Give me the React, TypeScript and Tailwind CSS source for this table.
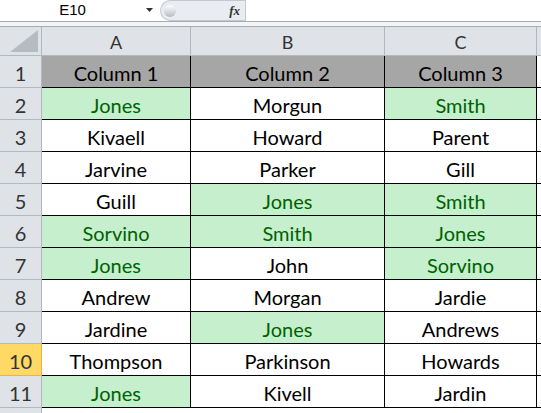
import React from 'react';

type Cell = { text: string; hit?: boolean };

const rows: Cell[][] = [
  [{ text: 'Jones', hit: true }, { text: 'Morgun' }, { text: 'Smith', hit: true }],
  [{ text: 'Kivaell' }, { text: 'Howard' }, { text: 'Parent' }],
  [{ text: 'Jarvine' }, { text: 'Parker' }, { text: 'Gill' }],
  [{ text: 'Guill' }, { text: 'Jones', hit: true }, { text: 'Smith', hit: true }],
  [{ text: 'Sorvino', hit: true }, { text: 'Smith', hit: true }, { text: 'Jones', hit: true }],
  [{ text: 'Jones', hit: true }, { text: 'John' }, { text: 'Sorvino', hit: true }],
  [{ text: 'Andrew' }, { text: 'Morgan' }, { text: 'Jardie' }],
  [{ text: 'Jardine' }, { text: 'Jones', hit: true }, { text: 'Andrews' }],
  [{ text: 'Thompson' }, { text: 'Parkinson' }, { text: 'Howards' }],
  [{ text: 'Jones', hit: true }, { text: 'Kivell' }, { text: 'Jardin' }],
];

const cols = 'grid grid-cols-[42px_149px_194px_152px_4px]';
const cellText = 'flex items-center justify-center pt-[3px] text-[20px] leading-[24px]';

export default function App() {
  return (
    <div className="w-[541px] h-[413px] overflow-hidden bg-white text-[#222]" style={{ fontFamily: 'Lato, "Open Sans", sans-serif' }}>
      {/* Formula bar */}
      <div className="flex h-[22px] border-b border-[#a5acb5] bg-white">
        <div className="w-[160px] flex items-center">
          <span className="w-[145px] text-center text-[15px] text-black" style={{ fontFamily: '"Liberation Sans", sans-serif' }}>E10</span>
          <svg width="8" height="5" viewBox="0 0 8 5" className="ml-[1px]">
            <path d="M0 0h7L3.5 4z" fill="#333" />
          </svg>
        </div>
        <div className="flex items-center w-[85px] h-[21px] bg-[#e9ecf0] border border-[#c3c8cf] rounded-l-[11px] border-r-0">
          <div className="ml-[3px] w-[12px] h-[12px] rounded-full bg-gradient-to-b from-white to-[#b8bcc2]" />
          <span className="ml-auto mr-[5px] text-[13px] italic font-bold text-[#333]" style={{ fontFamily: '"Liberation Serif", serif' }}>fx</span>
        </div>
        <div className="flex-1 border-l border-[#c3c8cf] bg-white" />
      </div>
      <div className="h-[5px] bg-[#f3f4f6] border-b border-[#a5acb5]" />

      {/* Column headers */}
      <div className={`${cols} h-[29px] bg-[#dfe3e8] border-b border-[#b2b8bf]`}>
        <div className="border-r border-[#b2b8bf] flex items-end justify-end pr-[3px] pb-[3px]">
          <svg width="28" height="22" viewBox="0 0 28 22">
            <path d="M28 0V22H0z" fill="#b6bbc2" />
          </svg>
        </div>
        {['A', 'B', 'C'].map((c) => (
          <div key={c} className="border-r border-[#b2b8bf] flex items-center justify-center pt-[2px] text-[18px] leading-[22px] text-[#333]">
            {c}
          </div>
        ))}
        <div />
      </div>

      {/* Header row */}
      <div className={`${cols} h-[32px] border-b border-black`}>
        <div className={`bg-[#dfe3e8] border-r border-[#b2b8bf] border-b border-b-[#b2b8bf] -mb-[1px] ${cellText} text-[#333]`}>1</div>
        {['Column 1', 'Column 2', 'Column 3'].map((c) => (
          <div key={c} className={`bg-[#a6a6a6] border-r border-black ${cellText} text-black`}>
            {c}
          </div>
        ))}
        <div />
      </div>

      {rows.map((r, i) => {
        const n = i + 2;
        const active = n === 10;
        return (
          <div key={n} className={`${cols} h-[32px] border-b border-black`}>
            <div
              className={`border-r -mb-[1px] border-b ${cellText} text-[#333] ${
                active ? 'bg-[#ffd966] border-[#f0b04a]' : 'bg-[#dfe3e8] border-[#b2b8bf]'
              }`}
            >
              {n}
            </div>
            {r.map((c, j) => (
              <div
                key={j}
                className={`border-r border-black ${cellText} ${
                  c.hit ? 'bg-[#c6efce] text-[#006100]' : 'bg-white text-black'
                }`}
              >
                {c.text}
              </div>
            ))}
            <div />
          </div>
        );
      })}
      <div className={`${cols} h-[10px]`}>
        <div className="bg-[#dfe3e8] border-r border-[#b2b8bf]" />
      </div>
    </div>
  );
}
